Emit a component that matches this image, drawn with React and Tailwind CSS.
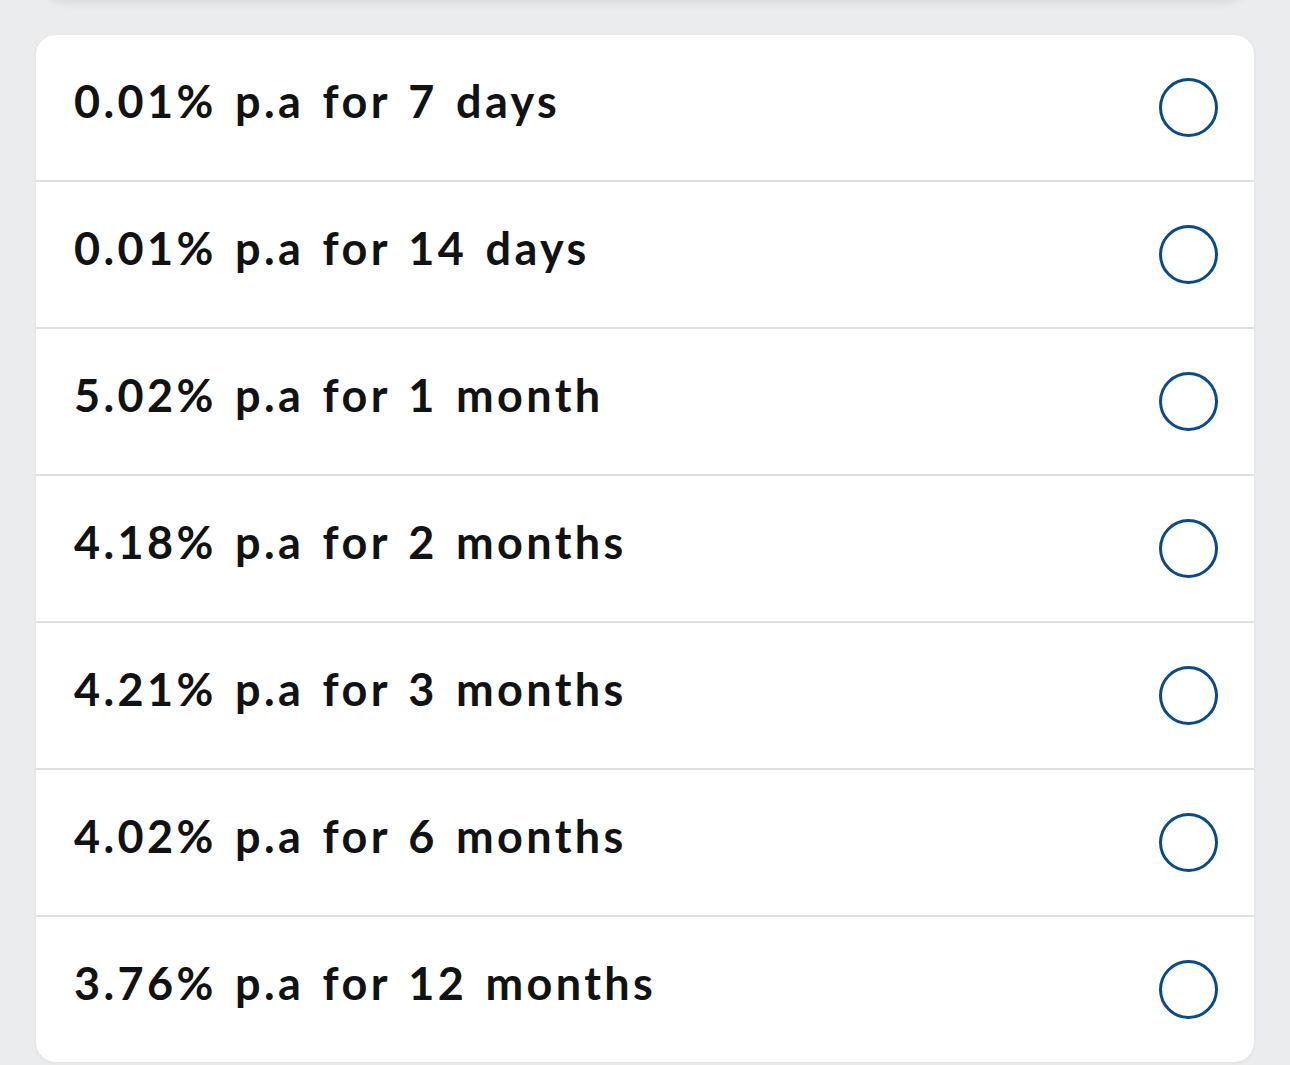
import React from "react";

const rows = [
  "0.01% p.a for 7 days",
  "0.01% p.a for 14 days",
  "5.02% p.a for 1 month",
  "4.18% p.a for 2 months",
  "4.21% p.a for 3 months",
  "4.02% p.a for 6 months",
  "3.76% p.a for 12 months",
];

export default function App() {
  return (
    <div className="min-h-[1065px] w-[1290px] bg-[#ebecee] overflow-hidden">
      <div className="mx-[45px] -mt-[40px] h-[40px] rounded-b-[20px] bg-[#ebecee] shadow-[0_2px_10px_rgba(0,0,0,0.10)]" />
      <div className="mt-[35px] ml-[36px] w-[1218px] rounded-[20px] bg-white shadow-[0_1px_4px_rgba(0,0,0,0.06)] overflow-hidden">
        {rows.map((r, i) => (
          <div
            key={i}
            className={
              i < rows.length - 1
                ? "flex h-[147px] items-center justify-between border-b-2 border-[#dedfe1] pl-[38px] pr-[36px]"
                : "flex h-[145px] items-center justify-between pl-[38px] pr-[36px]"
            }
          >
            <span
              className="text-[45px] font-bold tracking-[0.075em] [word-spacing:4px] text-[#111214] -mt-[12px]"
              style={{ fontFamily: "Lato, 'Open Sans', sans-serif" }}
            >
              {r}
            </span>
            <span className="block h-[59px] w-[59px] rounded-full border-[3px] border-[#0b4a88]" />
          </div>
        ))}
      </div>
    </div>
  );
}
